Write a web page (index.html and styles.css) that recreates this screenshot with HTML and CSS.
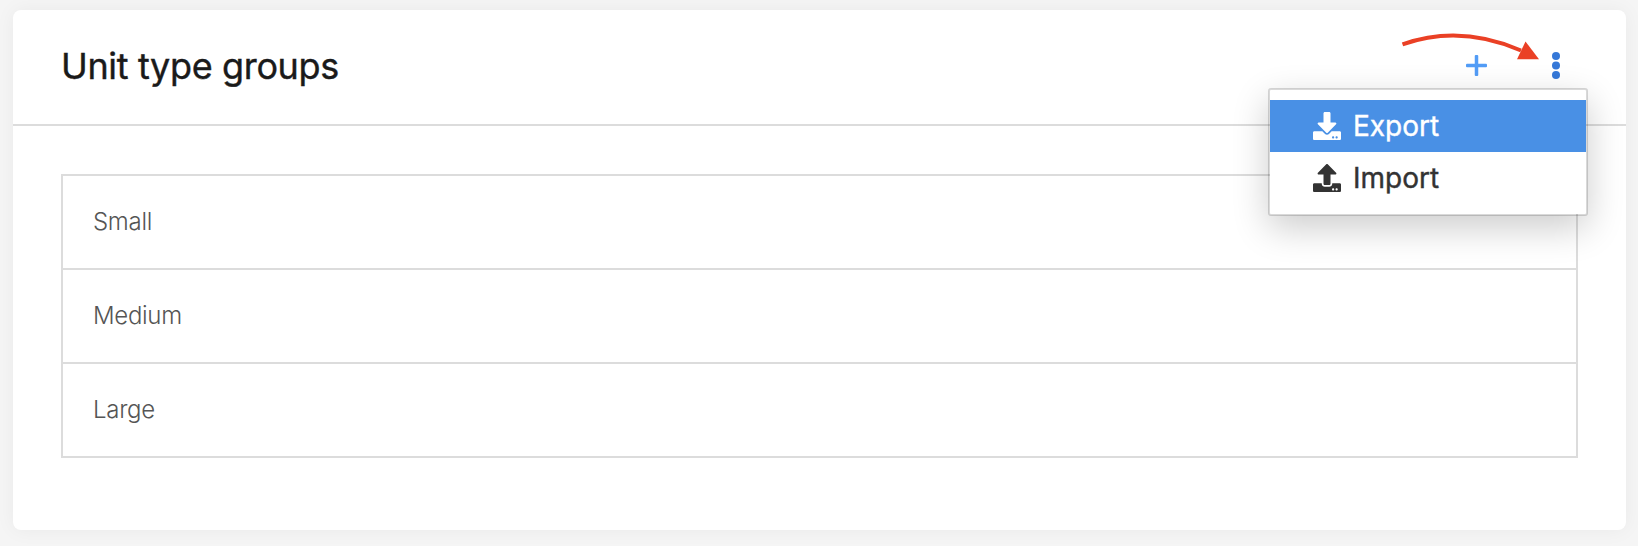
FILE: index.html
```html
<!DOCTYPE html>
<html lang="en">
<head>
    <meta charset="UTF-8">
    <meta name="viewport" content="width=device-width, initial-scale=1.0">
    <title>Unit type groups</title>
    <link rel="stylesheet" href="styles.css">
</head>
<body>
    <div class="card">
        <div class="card-header">
            <h1 class="title">Unit type groups</h1>
            <div class="actions">
                <button class="btn add" aria-label="Add">
                    <svg width="21" height="21" viewBox="0 0 21 21" fill="#529cf6">
                        <rect x="8.75" y="0" width="3.5" height="21" rx="1"/>
                        <rect x="0" y="8.75" width="21" height="3.5" rx="1"/>
                    </svg>
                </button>
                <button class="btn more" aria-label="More">
                    <svg width="8" height="27" viewBox="0 0 8 27" fill="#3578d8">
                        <circle cx="4" cy="4" r="4"/>
                        <circle cx="4" cy="13.5" r="4"/>
                        <circle cx="4" cy="23" r="4"/>
                    </svg>
                </button>
                <svg class="arrow" width="140" height="30" viewBox="0 0 140 30">
                    <path d="M2.5 14.4Q60 -6 121 20.5" fill="none" stroke="#ea4025" stroke-width="4"/>
                    <path d="M125.5 11.5L139 29.2H117z" fill="#ea4025"/>
                </svg>
                <div class="menu">
                    <div class="menu-item active">
                        <svg width="28" height="28" viewBox="0 0 512 512" fill="currentColor">
                            <path d="M216 0h80c13.3 0 24 10.7 24 24v168h87.7c17.8 0 26.7 21.5 14.1 34.1L269.7 378.3c-7.5 7.5-19.8 7.5-27.3 0L90.1 226.1c-12.6-12.6-3.7-34.1 14.1-34.1H192V24c0-13.3 10.7-24 24-24zm296 376v112c0 13.3-10.7 24-24 24H24c-13.3 0-24-10.7-24-24V376c0-13.3 10.7-24 24-24h146.7l49 49c20.1 20.1 52.5 20.1 72.6 0l49-49H488c13.3 0 24 10.7 24 24zm-124 88c0-11-9-20-20-20s-20 9-20 20 9 20 20 20 20-9 20-20zm64 0c0-11-9-20-20-20s-20 9-20 20 9 20 20 20 20-9 20-20z"/>
                        </svg>
                        <span>Export</span>
                    </div>
                    <div class="menu-item">
                        <svg width="28" height="28" viewBox="0 0 512 512" fill="currentColor">
                            <path d="M296 384h-80c-13.3 0-24-10.7-24-24V192h-87.7c-17.8 0-26.7-21.5-14.1-34.1L242.3 5.7c7.5-7.5 19.8-7.5 27.3 0l152.2 152.2c12.6 12.6 3.7 34.1-14.1 34.1H320v168c0 13.3-10.7 24-24 24zm216-8v112c0 13.3-10.7 24-24 24H24c-13.3 0-24-10.7-24-24V376c0-13.3 10.7-24 24-24h136v8c0 30.9 25.1 56 56 56h80c30.9 0 56-25.1 56-56v-8h136c13.3 0 24 10.7 24 24zm-124 88c0-11-9-20-20-20s-20 9-20 20 9 20 20 20 20-9 20-20zm64 0c0-11-9-20-20-20s-20 9-20 20 9 20 20 20 20-9 20-20z"/>
                        </svg>
                        <span>Import</span>
                    </div>
                </div>
            </div>
        </div>
        <div class="card-body">
            <ul class="list">
                <li class="list-item">Small</li>
                <li class="list-item">Medium</li>
                <li class="list-item">Large</li>
            </ul>
        </div>
    </div>
</body>
</html>
```

FILE: styles.css
```css
* {
    box-sizing: border-box;
}

body {
    margin: 0;
    padding: 10px 12px 16px 13px;
    height: 546px;
    overflow: hidden;
    font-family: Inter, "Liberation Sans", sans-serif;
    background-color: #f5f5f5;
}

.card {
    height: 520px;
    background-color: #fff;
    border-radius: 8px;
    box-shadow: 0 0 20px rgba(0, 0, 0, 0.05);
}

.card-header {
    display: flex;
    justify-content: space-between;
    align-items: center;
    height: 116px;
    padding: 0 66px 3px 48px;
    border-bottom: 2px solid #dcdcdc;
}

.title {
    margin: 0;
    font-size: 36px;
    font-weight: 400;
    line-height: 44px;
    letter-spacing: -0.35px;
    color: #1a1a1a;
    -webkit-text-stroke: 0.4px #1a1a1a;
}

.actions {
    position: relative;
    display: flex;
    align-items: center;
    gap: 65px;
}

.btn {
    display: flex;
    padding: 0;
    border: none;
    background: none;
    cursor: pointer;
}

.arrow {
    position: absolute;
    top: -22px;
    right: 20px;
}

.menu {
    position: absolute;
    top: 36px;
    right: -28px;
    width: 320px;
    padding: 10px 0;
    background-color: #fff;
    background-clip: padding-box;
    border: 2px solid rgba(0, 0, 0, 0.15);
    border-radius: 3px;
    box-shadow: 0 12px 36px rgba(0, 0, 0, 0.2);
}

.menu-item {
    display: flex;
    align-items: center;
    gap: 12px;
    height: 52px;
    padding-left: 43px;
    font-size: 28px;
    color: #333;
    -webkit-text-stroke: 0.4px currentColor;
}

.menu-item.active {
    background-color: #4990e5;
    color: #fff;
}

.card-body {
    padding: 48px;
}

.list {
    margin: 0;
    padding: 0;
    list-style: none;
    border: 2px solid #dcdcdc;
}

.list-item {
    display: flex;
    align-items: center;
    height: 94px;
    padding: 0 30px 1px;
    font-size: 24px;
    font-weight: 300;
    letter-spacing: -0.3px;
    color: #555;
    border-bottom: 2px solid #dcdcdc;
}

.list-item:last-child {
    height: 92px;
    border-bottom: none;
}
```
